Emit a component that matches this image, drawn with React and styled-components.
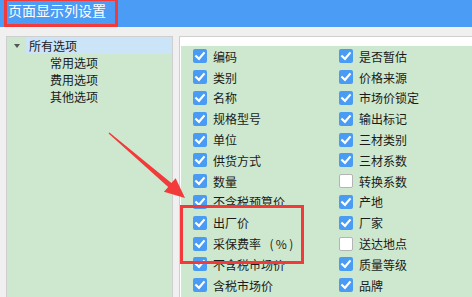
import React from "react";
import styled, { createGlobalStyle } from "styled-components";

const GlobalStyle = createGlobalStyle`
  html, body {
    margin: 0;
    padding: 0;
    background: #f0f0f0;
    font-family: "Noto Sans CJK SC", "Noto Sans", sans-serif;
    color: #1a1a1a;
  }
`;

const columnOne = [
  { label: "编码", on: true },
  { label: "类别", on: true },
  { label: "名称", on: true },
  { label: "规格型号", on: true },
  { label: "单位", on: true },
  { label: "供货方式", on: true },
  { label: "数量", on: true },
  { label: "不含税预算价", on: true },
  { label: "出厂价", on: true },
  { label: "采保费率\u2002\u2009(\u2009%\u2009)", on: true },
  { label: "不含税市场价", on: true },
  { label: "含税市场价", on: true },
];

const columnTwo = [
  { label: "是否暂估", on: true },
  { label: "价格来源", on: true },
  { label: "市场价锁定", on: true },
  { label: "输出标记", on: true },
  { label: "三材类别", on: true },
  { label: "三材系数", on: true },
  { label: "转换系数", on: false },
  { label: "产地", on: true },
  { label: "厂家", on: true },
  { label: "送达地点", on: false },
  { label: "质量等级", on: true },
  { label: "品牌", on: true },
];

const CheckBox = ({ on }) => (
  <Box on={on ? 1 : 0}>
    {on && (
      <svg width="14" height="14" viewBox="0 0 14 14">
        <polyline
          points="3.2,7.2 6,9.8 10.8,4.2"
          fill="none"
          stroke="#fff"
          strokeWidth="2.2"
          strokeLinecap="square"
        />
      </svg>
    )}
  </Box>
);

const App = () => {
  const items = [];
  columnOne.forEach((item, i) => {
    items.push(item);
    items.push(columnTwo[i]);
  });

  return (
    <Page>
      <GlobalStyle />
      <Header>
        <Title>页面显示列设置</Title>
        <TitleMark />
      </Header>
      <Body>
        <TreePanel>
          <TreeRow>
            <Caret />
            <TreeLabel selected>所有选项</TreeLabel>
          </TreeRow>
          <TreeRow child>
            <TreeLabel>常用选项</TreeLabel>
          </TreeRow>
          <TreeRow child>
            <TreeLabel>费用选项</TreeLabel>
          </TreeRow>
          <TreeRow child>
            <TreeLabel>其他选项</TreeLabel>
          </TreeRow>
        </TreePanel>
        <OptionPanel>
          <OptionGrid>
            {items.map((item, i) => (
              <Option key={i}>
                <CheckBox on={item.on} />
                <span>{item.label}</span>
              </Option>
            ))}
          </OptionGrid>
        </OptionPanel>
      </Body>
      <RowMark />
      <Arrow width="472" height="297" viewBox="0 0 472 297">
        <polygon
          points="109.45,132.47 171.4,183.1 175.65,178.16 185,198 163.95,191.84 168.2,186.9 108.55,133.53"
          fill="#f23a3a"
        />
      </Arrow>
    </Page>
  );
};

export default App;

const Page = styled.div`
  position: relative;
  width: 472px;
  height: 297px;
  overflow: hidden;
  background: #f0f0f0;
`;

const Header = styled.div`
  position: relative;
  height: 27px;
  background: #4b9cf5;
  padding-left: 8px;
`;

const Title = styled.div`
  color: #fff;
  font-size: 14px;
  line-height: 21px;
`;

const TitleMark = styled.div`
  position: absolute;
  left: 4px;
  top: -2px;
  width: 114px;
  height: 29px;
  box-sizing: border-box;
  border: 3px solid #f23a3a;
`;

const Body = styled.div`
  display: flex;
  gap: 6px;
  padding: 9px 0 0 6px;
  height: 270px;
  box-sizing: border-box;
`;

const TreePanel = styled.div`
  width: 167px;
  flex: none;
  box-sizing: border-box;
  border: 1px solid #cfcfcf;
  border-bottom: none;
  background: #cde8cf;
  height: 300px;
`;

const TreeRow = styled.div`
  display: flex;
  align-items: center;
  height: 17px;
  padding-left: ${(p) => (p.child ? "40px" : "7px")};
  font-size: 12px;
`;

const Caret = styled.span`
  width: 0;
  height: 0;
  border-left: 3.5px solid transparent;
  border-right: 3.5px solid transparent;
  border-top: 4px solid #555;
  margin-right: 6px;
  margin-top: 1px;
`;

const TreeLabel = styled.div`
  flex: 1;
  height: 17px;
  line-height: 17px;
  padding-left: 3px;
  background: ${(p) => (p.selected ? "#cce4f7" : "transparent")};
`;

const OptionPanel = styled.div`
  flex: none;
  width: 320px;
  box-sizing: border-box;
  border: 1px solid #cfcfcf;
  border-bottom: none;
  background: #fff;
  padding: 9px 0 0 1px;
  height: 300px;
`;

const OptionGrid = styled.div`
  display: grid;
  grid-template-columns: 146px 1fr;
  grid-auto-rows: 20.8px;
  padding-left: 12px;
  background: #cde8cf;
  height: 100%;
`;

const Option = styled.div`
  display: flex;
  align-items: center;
  gap: 6px;
  font-size: 12px;
  white-space: nowrap;
`;

const Box = styled.span`
  display: inline-flex;
  width: 14px;
  height: 14px;
  flex: none;
  box-sizing: border-box;
  border-radius: 2px;
  background: ${(p) => (p.on ? "#4a9bf4" : "#fff")};
  border: ${(p) => (p.on ? "none" : "1px solid #b4b4b4")};
`;

const RowMark = styled.div`
  position: absolute;
  left: 180px;
  top: 205px;
  width: 124px;
  height: 59px;
  box-sizing: border-box;
  border: 3px solid #f23a3a;
`;

const Arrow = styled.svg`
  position: absolute;
  left: 0;
  top: 0;
  pointer-events: none;
`;
